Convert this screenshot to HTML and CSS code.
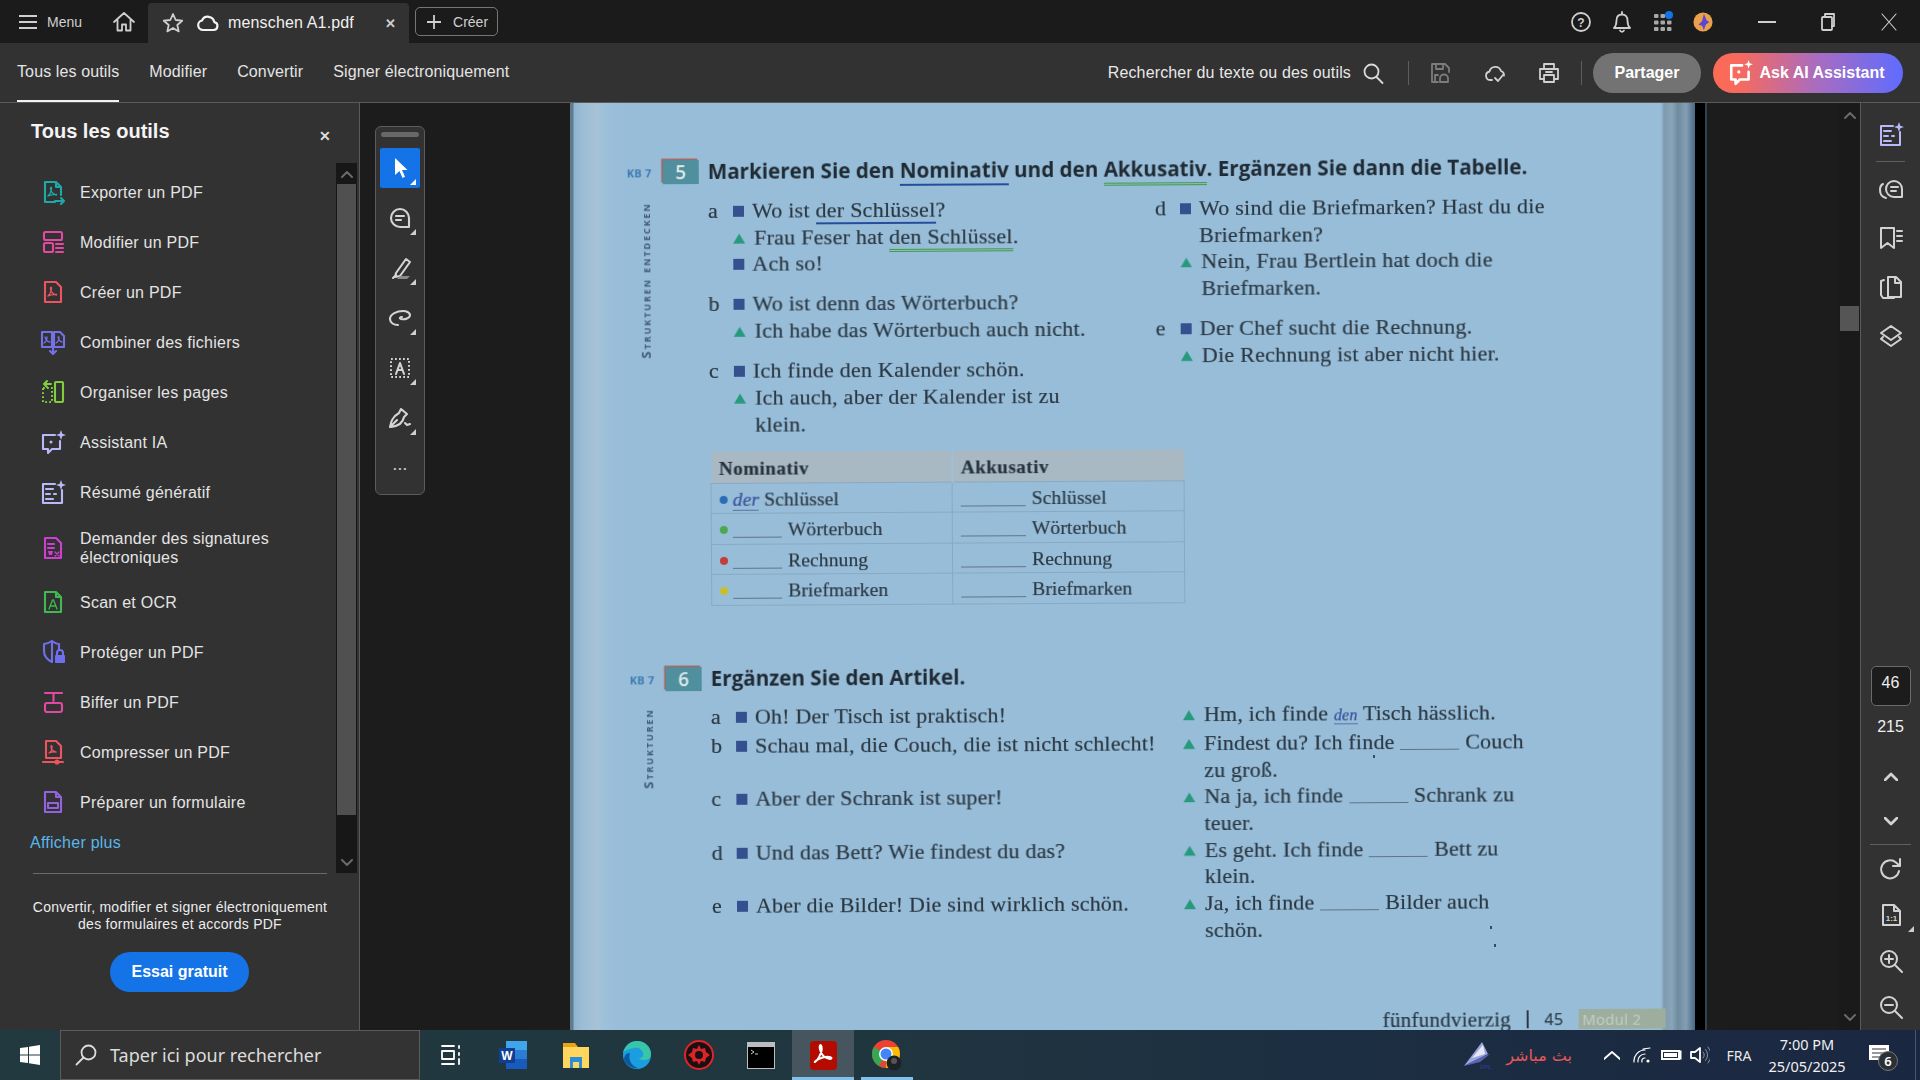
FILE: index.html
```html
<!DOCTYPE html>
<html lang="fr">
<head>
<meta charset="utf-8">
<title>menschen A1.pdf</title>
<link rel="stylesheet" href="styles.css">
</head>
<body>
<div class="app">
  <header class="titlebar">
    <svg class="ic menu-ic" viewBox="0 0 18 16"><path d="M0 2h18M0 8h18M0 14h18"/></svg>
    <span class="menu-label">Menu</span>
    <svg class="ic s24 home-ic" viewBox="0 0 24 24"><path d="M2 12 12 3l10 9M5.500 10v10.500h4.500v-6h4v6h4.500V10"/></svg>
    <div class="tab">
      <svg class="ic s24" viewBox="0 0 24 24"><path d="m12 3 2.700 6 6.500.7-4.900 4.300 1.400 6.400L12 17l-5.700 3.400L7.700 14 2.800 9.700 9.300 9z"/></svg>
      <svg class="ic s24 tab-cloud" viewBox="0 0 24 24"><path d="M7 19h10.500a4 4 0 0 0 .8-7.900A6.500 6.500 0 0 0 6 9.500 4.800 4.800 0 0 0 7 19z"/></svg>
      <span class="tab-name">menschen A1.pdf</span>
      <span class="tab-x">✕</span>
    </div>
    <div class="create"><svg class="ic s14" viewBox="0 0 14 14"><path d="M7 0v14M0 7h14"/></svg><span>Créer</span></div>
    <div class="title-right">
      <span class="tslot"><svg class="ic s22" viewBox="0 0 22 22"><circle cx="11" cy="11" r="9"/><text class="qmark" x="11" y="15.500">?</text></svg></span>
      <span class="tslot"><svg class="ic s22" viewBox="0 0 22 22"><path d="M3 17h16c-2-2-2.500-3.500-2.500-7.500C16.500 6 14.500 3.500 11 3.500S5.500 6 5.500 9.500C5.500 13.500 5 15 3 17zM9 19.500a2.200 2.200 0 0 0 4 0M11 1v2.500"/></svg></span>
      <span class="tslot grid-slot"><svg class="s22" viewBox="0 0 22 22"><g class="dots"><rect x="2" y="3" width="4.500" height="4" rx="1"/><rect x="8.500" y="3" width="4.500" height="4" rx="1"/><rect x="2" y="9.500" width="4.500" height="4" rx="1"/><rect x="8.500" y="9.500" width="4.500" height="4" rx="1"/><rect x="15" y="9.500" width="4.500" height="4" rx="1"/><rect x="2" y="16" width="4.500" height="4" rx="1"/><rect x="8.500" y="16" width="4.500" height="4" rx="1"/><rect x="15" y="16" width="4.500" height="4" rx="1"/></g><circle class="bluedot" cx="17" cy="4" r="4"/></svg></span>
      <span class="tslot"><svg class="s22 avatar" viewBox="0 0 22 22"><circle class="av-bg" cx="11" cy="11" r="10.500"/><path class="av-star" d="M12 2l3 7 3 2-4 3-2 6-2-5-4-1 4-4z"/></svg></span>
      <span class="wslot first-w"><svg class="ic s18" viewBox="0 0 18 18"><path d="M0 9h18"/></svg></span>
      <span class="wslot"><svg class="ic s18" viewBox="0 0 18 18"><rect x="3" y="4" width="10" height="13" rx="1"/><path d="M6 4V1h9v12h-2"/></svg></span>
      <span class="wslot"><svg class="ic thin s18" viewBox="0 0 18 18"><path d="m2 1 14 16M16 1 2 17"/></svg></span>
    </div>
  </header>

  <nav class="toolbar">
    <a class="nav active">Tous les outils</a>
    <a class="nav">Modifier</a>
    <a class="nav">Convertir</a>
    <a class="nav">Signer électroniquement</a>
    <div class="tool-right">
      <span class="search-text">Rechercher du texte ou des outils</span>
      <svg class="ic s22 search-ic" viewBox="0 0 22 22"><circle cx="9.500" cy="9.500" r="7"/><path d="m14.500 15 6 6"/></svg>
      <span class="vsep first-sep"></span>
      <svg class="ic s24 dim save-ic" viewBox="0 0 24 24"><path d="M10 21H4V3h13l4 4v4M8 3v5h7V3M7 21v-7h3"/><path d="M12 21v-3.500a4 4 0 0 1 8 0V21z"/></svg>
      <svg class="ic s24 cloud-ic" viewBox="0 0 24 24"><path d="M9 19H7a4.300 4.300 0 0 1-.5-8.500 6 6 0 0 1 11.500-.5 4.500 4.500 0 0 1 3 4.500"/><path d="m12 17 3 3 5-6"/></svg>
      <svg class="ic s24 print-ic" viewBox="0 0 24 24"><path d="M7 8V3h10v5M7 18H3V8h18v10h-4"/><rect x="7" y="14" width="10" height="7"/><path d="M9 11h6"/></svg>
      <span class="vsep second-sep"></span>
      <button class="pill share">Partager</button>
      <button class="pill ask"><svg class="ic s24 ask-ic" viewBox="0 0 24 24"><path d="M13 5H3v13h4v4l4-4h8v-7"/><path class="fillw" d="m19 0 1 3 3 1-3 1-1 3-1-3-3-1 3-1z"/><circle class="fillw" cx="10" cy="11" r="1.500"/></svg>Ask AI Assistant</button>
    </div>
  </nav>

  <main class="workspace">
    <aside class="panel">
      <div class="panel-head">
        <h1>Tous les outils</h1>
        <span class="panel-x">✕</span>
      </div>
      <div class="panel-scroll">
        <div class="tools">
          <a class="tool"><svg class="ic s26 teal" viewBox="0 0 26 26"><path d="M15 23H5V3h11l5 5v8M16 3v5h5"/><path class="thin" d="M8 17c2-1.500 3-4 3.500-7 .3-2-.9-2.500-1-.5 0 3 3 6 6 6.500M8 17c2-1 5-2 8.500-1.500"/><path d="M15 22h9m-3-3 3 3-3 3"/></svg><span>Exporter un PDF</span></a>
          <a class="tool"><svg class="ic s26 pink" viewBox="0 0 26 26"><rect x="4" y="3" width="18" height="8" rx="1.500"/><rect x="4" y="14" width="9" height="9" rx="1.500"/><path d="M16 15h7M16 19h7M16 23h7"/></svg><span>Modifier un PDF</span></a>
          <a class="tool"><svg class="ic s26 red" viewBox="0 0 26 26"><path d="M5 3h11l5 5v15H5z"/><path class="thin" d="M8 17c2-1.500 3-4 3.500-7 .3-2-.9-2.500-1-.5 0 3 3 6 6 6.500M8 17c2-1 5-2 8.500-1.500"/></svg><span>Créer un PDF</span></a>
          <a class="tool"><svg class="ic s26 violet" viewBox="0 0 26 26"><path d="M12 3H2v15h10zM14 18h10V7l-4-4h-6zM13 18v7m-3-3 3 3 3-3"/><path class="thin" d="M4 14c2-1 3-3 3-6M5 8c1 3 3 5 5 5M16 14c2-1 3-3 3-6M18 8c1 3 2 5 4 5"/></svg><span>Combiner des fichiers</span></a>
          <a class="tool"><svg class="ic s26 lime" viewBox="0 0 26 26"><rect x="15" y="3" width="8" height="20" rx="1"/><path class="dash" d="M3 9h9v14H3z"/><path d="M11 5H5m2-3L4 5l3 3"/></svg><span>Organiser les pages</span></a>
          <a class="tool"><svg class="ic s26 lav" viewBox="0 0 26 26"><path d="M15 6H3v14h5v4l4-4h8v-8"/><path class="fillc" d="m21 1 1.300 3.700L26 6l-3.700 1.300L21 11l-1.300-3.700L16 6l3.700-1.300z"/><circle class="fillc" cx="11" cy="13" r="1.500"/></svg><span>Assistant IA</span></a>
          <a class="tool"><svg class="ic s26 lav" viewBox="0 0 26 26"><path d="M15 5H3v19h19V11"/><path d="M6 10h7M6 15h4M14 15h2M6 20h7"/><path class="fillc" d="m21 1 1.300 3.700L26 6l-3.700 1.300L21 11l-1.300-3.700L16 6l3.700-1.300z"/></svg><span>Résumé génératif</span></a>
          <a class="tool tall"><svg class="ic s26 magenta" viewBox="0 0 26 26"><path d="M5 3h11l5 5v15H5z"/><path d="M8 9h6M8 13h6"/><path class="fillc" d="M8 16h5l-1 4H9z"/><path class="thin" d="m15 17 4 4m0-4-4 4"/></svg><span>Demander des signatures électroniques</span></a>
          <a class="tool"><svg class="ic s26 green" viewBox="0 0 26 26"><path d="M5 3h11l5 5v15H5zM16 3v5h5"/><path class="thin" d="m9 20 3.500-9h1L17 20M10.500 17h5"/></svg><span>Scan et OCR</span></a>
          <a class="tool"><svg class="ic s26 indigo" viewBox="0 0 26 26"><path d="M12 2c-3 2-6 3-8 3v7c0 5 4 9 8 11V2zM12 2c3 2 5 3 7 3v5"/><rect class="fillc" x="15" y="16" width="10" height="8" rx="1"/><path d="M17 16v-2a3 3 0 0 1 6 0v2"/></svg><span>Protéger un PDF</span></a>
          <a class="tool"><svg class="ic s26 pink" viewBox="0 0 26 26"><path d="M5 4h17M13.500 4v8"/><rect x="5" y="14" width="17" height="9" rx="2"/></svg><span>Biffer un PDF</span></a>
          <a class="tool"><svg class="ic s26 red" viewBox="0 0 26 26"><path d="M6 19V2h10l5 5v12zM3 23h20"/><circle cx="17" cy="23" r="1.500"/><path class="thin" d="M9 14c2-1 3-3 3-6 0-2-1-1.500-1 0 0 2 2 4 5 5M9 14c2-1 5-1.500 7-1"/></svg><span>Compresser un PDF</span></a>
          <a class="tool"><svg class="ic s26 purple" viewBox="0 0 26 26"><path d="M5 3h11l5 5v15H5zM16 3v5h5"/><rect x="8" y="14" width="10" height="5"/></svg><span>Préparer un formulaire</span></a>
          <a class="more">Afficher plus</a>
        </div>
        <div class="pscroll">
          <div class="pscroll-btn"><svg class="ic chev" viewBox="0 0 12 8"><path d="m1 7 5-5 5 5"/></svg></div>
          <div class="pscroll-thumb"></div>
          <div class="pscroll-rest"><svg class="ic chev" viewBox="0 0 12 8"><path d="m1 1 5 5 5-5"/></svg></div>
        </div>
      </div>
      <div class="promo">
        <p>Convertir, modifier et signer électroniquement<br>des formulaires et accords PDF</p>
        <button class="trial">Essai gratuit</button>
      </div>
    </aside>

    <section class="canvas">
      <div class="palette">
        <div class="grab"></div>
        <div class="pbtn on"><svg class="s24" viewBox="0 0 24 24"><path class="fillw" d="M7 2v17l4.500-4 3 7 2.500-1.200-3-6.800h5.500z"/></svg></div>
        <div class="pbtn"><svg class="ic s24" viewBox="0 0 24 24"><path d="M21 21h-9a9 9 0 1 1 9-9zM8 10h8M8 14h5"/></svg></div>
        <div class="pbtn"><svg class="ic s24" viewBox="0 0 24 24"><path d="m8 17 10-14 4 3-10 14-5 1zM5 22l3-3"/><path class="fillg" d="M9 23h10l3-3H12z"/></svg></div>
        <div class="pbtn"><svg class="ic s24" viewBox="0 0 24 24"><path d="M10 19c-4 0-8-2-8-6 0-5 7-8 13-8 4 0 7 2 7 4 0 3-5 5-9 4-2-.5-1-2 1-2"/></svg></div>
        <div class="pbtn"><svg class="ic s24" viewBox="0 0 24 24"><path class="dash" d="M3 3h18v18H3z"/><path d="m8 18 4-11 4 11M9.500 14h5"/></svg></div>
        <div class="pbtn"><svg class="ic s24" viewBox="0 0 24 24"><path d="M2 21c1-5 2-10 9-14l2-4 6 5-3 3c-1 6-6 9-13 10zM2 21l7-7"/><path d="m17 17 2 2 3-1"/></svg></div>
        <div class="pbtn plain"><span class="ellipsis">• • •</span></div>
      </div>

      <div class="sheet">
        <div class="sheet-inner">
          <div class="ex-head">
            <div class="side"><span class="kb">KB 7</span><span class="num">5</span></div>
            <h2>Markieren Sie den <u class="nom">Nominativ</u> und den <u class="akk">Akkusativ</u>. Ergänzen Sie dann die Tabelle.</h2>
          </div>
          <div class="ex5">
            <div class="side"><span class="vert">Strukturen entdecken</span></div>
            <div class="col">
              <div class="group"><b class="let">a</b><div><p class="ln"><i class="sq"></i><span>Wo ist <u class="nom thinline">der Schlüssel</u>?</span></p><p class="ln"><i class="tri"></i><span>Frau Feser hat <u class="akk thinline">den Schlüssel</u>.</span></p><p class="ln"><i class="sq"></i><span>Ach so!</span></p></div></div>
              <div class="group"><b class="let">b</b><div><p class="ln"><i class="sq"></i><span>Wo ist denn das Wörterbuch?</span></p><p class="ln"><i class="tri"></i><span>Ich habe das Wörterbuch auch nicht.</span></p></div></div>
              <div class="group"><b class="let">c</b><div><p class="ln"><i class="sq"></i><span>Ich finde den Kalender schön.</span></p><p class="ln"><i class="tri"></i><span>Ich auch, aber der Kalender ist zu<br>klein.</span></p></div></div>
            </div>
            <div class="col">
              <div class="group"><b class="let">d</b><div><p class="ln"><i class="sq"></i><span>Wo sind die Briefmarken? Hast du die<br>Briefmarken?</span></p><p class="ln"><i class="tri"></i><span>Nein, Frau Bertlein hat doch die<br>Briefmarken.</span></p></div></div>
              <div class="group"><b class="let">e</b><div><p class="ln"><i class="sq"></i><span>Der Chef sucht die Rechnung.</span></p><p class="ln"><i class="tri"></i><span>Die Rechnung ist aber nicht hier.</span></p></div></div>
            </div>
          </div>
          <table class="grammar">
            <thead><tr><th>Nominativ</th><th>Akkusativ</th></tr></thead>
            <tbody>
              <tr><td><i class="dot d-blue"></i><em class="hand">der</em> Schlüssel</td><td><i class="blank wide"></i>Schlüssel</td></tr>
              <tr><td><i class="dot d-green"></i><i class="blank"></i>Wörterbuch</td><td><i class="blank wide"></i>Wörterbuch</td></tr>
              <tr><td><i class="dot d-red"></i><i class="blank"></i>Rechnung</td><td><i class="blank wide"></i>Rechnung</td></tr>
              <tr><td><i class="dot d-yellow"></i><i class="blank"></i>Briefmarken</td><td><i class="blank wide"></i>Briefmarken</td></tr>
            </tbody>
          </table>
          <div class="ex-head second">
            <div class="side"><span class="kb">KB 7</span><span class="num">6</span></div>
            <h2>Ergänzen Sie den Artikel.</h2>
          </div>
          <div class="ex6">
            <div class="side spanall"><span class="vert">Strukturen</span></div>
            <div class="group"><b class="let">a</b><p class="ln"><i class="sq"></i><span>Oh! Der Tisch ist praktisch!</span></p></div>
            <p class="ln"><i class="tri"></i><span>Hm, ich finde <em class="hand small">den</em> Tisch hässlich.</span></p>
            <div class="group"><b class="let">b</b><p class="ln"><i class="sq"></i><span>Schau mal, die Couch, die ist nicht schlecht!</span></p></div>
            <p class="ln"><i class="tri"></i><span>Findest du? Ich finde <i class="blank mid"></i>Couch<br>zu groß.</span></p>
            <div class="group"><b class="let">c</b><p class="ln"><i class="sq"></i><span>Aber der Schrank ist super!</span></p></div>
            <p class="ln"><i class="tri"></i><span>Na ja, ich finde <i class="blank mid"></i>Schrank zu<br>teuer.</span></p>
            <div class="group"><b class="let">d</b><p class="ln"><i class="sq"></i><span>Und das Bett? Wie findest du das?</span></p></div>
            <p class="ln"><i class="tri"></i><span>Es geht. Ich finde <i class="blank mid"></i>Bett zu<br>klein.</span></p>
            <div class="group"><b class="let">e</b><p class="ln"><i class="sq"></i><span>Aber die Bilder! Die sind wirklich schön.</span></p></div>
            <p class="ln"><i class="tri"></i><span>Ja, ich finde <i class="blank mid"></i>Bilder auch<br>schön.</span></p>
          </div>
          <div class="foot"><span>fünfundvierzig</span><span class="bar"></span><span class="pg">45</span><span class="modul">Modul 2</span></div>
        </div>
        <i class="speck sp1"></i><i class="speck sp2"></i><i class="speck sp3"></i>
      </div>

      <div class="gap"></div>

      <div class="vscroll">
        <svg class="ic chev" viewBox="0 0 12 8"><path d="m1 7 5-5 5 5"/></svg>
        <div class="vthumb"></div>
        <svg class="ic chev" viewBox="0 0 12 8"><path d="m1 1 5 5 5-5"/></svg>
      </div>

      <div class="rail">
        <div class="rbtn"><svg class="ic s26 lav" viewBox="0 0 26 26"><path d="M15 5H3v19h19V11"/><path d="M6 10h7M6 15h4M14 15h2M6 20h7"/><path class="fillc" d="m21 1 1.300 3.700L26 6l-3.700 1.300L21 11l-1.300-3.700L16 6l3.700-1.300z"/></svg></div>
        <div class="hsep top-sep"></div>
        <div class="rbtn"><svg class="ic s24" viewBox="0 0 24 24"><path d="M23 20h-8a8 8 0 1 1 8-8zM12 10h7M12 14h5"/><path d="M7 21c-4-1-6-4-6-8 0-2 1-5 3-6"/></svg></div>
        <div class="rbtn"><svg class="ic s24" viewBox="0 0 24 24"><path d="M2 2h13v20l-6.500-5L2 22zM18 5h5M18 10h5M18 15h5"/></svg></div>
        <div class="rbtn"><svg class="ic s24" viewBox="0 0 24 24"><path d="M9 2h8l5 5v15H9zM16 2v6h6M5 5 2 6v14l2 3h11"/></svg></div>
        <div class="rbtn"><svg class="ic s24" viewBox="0 0 24 24"><path d="m12 2 10 7-10 7L2 9zM4 13l-2 2 10 7 10-7-2-2"/></svg></div>
        <div class="rail-low">
          <div class="page-box">46</div>
          <div class="page-total">215</div>
          <div class="rbtn low"><svg class="ic bold chevb" viewBox="0 0 14 9"><path d="m1 8 6-6 6 6"/></svg></div>
          <div class="rbtn low"><svg class="ic bold chevb" viewBox="0 0 14 9"><path d="m1 1 6 6 6-6"/></svg></div>
          <div class="hsep bottom-sep"></div>
          <div class="rbtn lower"><svg class="ic s24" viewBox="0 0 24 24"><path d="M20 14a9 9 0 1 1-3-8.500L21 9M21 2v7h-7"/></svg></div>
          <div class="rbtn lower mark"><svg class="ic s24" viewBox="0 0 24 24"><path d="M4 2h11l6 6v14H4zM15 2v6h6"/><text class="oneone" x="12.500" y="18">1:1</text></svg></div>
          <div class="rbtn lower"><svg class="ic s24" viewBox="0 0 24 24"><circle cx="10" cy="10" r="8"/><path d="m16 16 7 7M10 6v8M6 10h8"/></svg></div>
          <div class="rbtn lower"><svg class="ic s24" viewBox="0 0 24 24"><circle cx="10" cy="10" r="8"/><path d="m16 16 7 7M6 10h8"/></svg></div>
        </div>
      </div>
    </section>
  </main>

  <footer class="taskbar">
    <div class="start"><svg class="win" viewBox="0 0 20 20"><path d="M0 3l8-1v7.500H0zM9 1.800 20 0v9.500H9zM0 10.500h8V18l-8-1zM9 10.500h11V20L9 18.200z"/></svg></div>
    <div class="tsearch"><svg class="ic s22 thin-wide" viewBox="0 0 22 22"><circle cx="13.500" cy="8.500" r="7"/><path d="m8.500 13.500-7 7"/></svg><span>Taper ici pour rechercher</span></div>
    <div class="tslotb"><svg class="ic s22" viewBox="0 0 22 22"><path d="M2 2h12M2 20h12M2 7h12v8H2zM19 2v2M19 9v2M19 15v5"/></svg></div>
    <div class="tslotb"><svg class="s32" viewBox="0 0 32 32"><path fill="#41a5ee" d="M9 2h21v9H9z"/><path fill="#2b7cd3" d="M9 11h21v9H9z"/><path fill="#185abd" d="M9 20h21v10H9z"/><rect fill="#103f91" x="2" y="9" width="16" height="15"/><text class="wletter" x="10" y="21">W</text></svg></div>
    <div class="tslotb"><svg class="s32" viewBox="0 0 32 32"><path fill="#e8a317" d="M4 4h12l3 4H4z"/><path fill="#ffd75e" d="M4 8h26v21H4z"/><path fill="#2b8fd8" d="M11 18h12v11h-3v-6h-6v6h-3z"/></svg></div>
    <div class="tslotb"><svg class="s32" viewBox="0 0 32 32"><circle fill="#1b9de2" cx="16" cy="16" r="14"/><path fill="#37c6a8" d="M2 14C4 6 10 2 16 2c8 0 14 6 14 13 0 4-3 6-7 6-3 0-5-1-5-2 3 0 5-2 4-5-1-4-5-6-9-5-5 1-9 2-11 5z"/><path fill="#0c5a9e" d="M9 14c-2 6 1 13 8 15-6 1-12-3-14-8 0-4 2-7 6-7z"/></svg></div>
    <div class="tslotb"><svg class="s32" viewBox="0 0 32 32"><circle fill="#1a1012" stroke="#e0242a" stroke-width="2" cx="16" cy="16" r="14"/><path fill="#d8242a" d="M16 6l2 4 4-1 1 4 4 3-4 3-1 4-4-1-2 4-2-4-4 1-1-4-4-3 4-3 1-4 4 1z"/><circle fill="#1a1012" cx="16" cy="16" r="4"/></svg></div>
    <div class="tslotb"><svg class="s32" viewBox="0 0 32 32"><rect fill="#bdbdbd" x="2" y="3" width="28" height="27"/><rect fill="#000" x="3" y="8" width="26" height="21"/><path stroke="#ccc" fill="none" d="M6 11l3 2-3 2M10 15h3"/></svg></div>
    <div class="tslotb act"><svg class="s32" viewBox="0 0 32 32"><rect fill="#b30b00" x="3" y="2" width="27" height="29" rx="4"/><path class="acro" d="M8 23c3-2 5-6 6.500-11 .6-3 0-6-1-6s-1.200 3 0 6c1.500 4 5 7.500 9.500 8 1.800 0 2-1.300.5-1.800-4-1-9.500.5-13 2.500-2 1.200-3.300 2.500-2.500 2.300z"/></svg></div>
    <div class="tslotb run"><svg class="s32 chrome" viewBox="0 0 32 32"><circle fill="#ea4335" cx="15" cy="15" r="14"/><path fill="#34a853" d="M15 29A14 14 0 0 1 2.900 8L15 15l-7 12z"/><path fill="#fbbc04" d="M15 29a14 14 0 0 0 12.100-21H15z"/><circle fill="#fff" cx="15" cy="15" r="7"/><circle fill="#4285f4" cx="15" cy="15" r="5.500"/><circle fill="#1c2228" cx="23" cy="24" r="7.500"/><circle fill="#555" cx="23" cy="22" r="3"/></svg></div>
    <div class="tray">
      <svg class="epl" viewBox="0 0 34 30"><path fill="#9aa5dd" d="M4 26 22 2l6 12z"/><path fill="#e8e8f5" d="M12 18 23 5l2 9z"/><path fill="#5864b8" d="m4 26 20-10 6-2-10 8z"/><text class="epl-t" x="20" y="29">EPL</text></svg>
      <span class="live" lang="ar" dir="rtl">بث مباشر</span>
      <span class="trayi i-chev"><svg class="ic s16w" viewBox="0 0 16 9"><path d="m0 8 8-7 8 7"/></svg></span>
      <span class="trayi"><svg class="ic s18" viewBox="0 0 18 18"><path d="M1 16A11 11 0 0 1 12 4M5 16a7 7 0 0 1 7-8M9 16a3 3 0 0 1 3-4M10 3l7-1" class="thinw"/><circle class="fillw" cx="15" cy="15" r="1.600"/></svg></span>
      <span class="trayi batt"><i></i></span>
      <span class="trayi"><svg class="ic s20w" viewBox="0 0 20 18"><path d="M1 6h4l5-4v14l-5-4H1z"/><path class="faint" d="M13 6a4 4 0 0 1 0 6M15.500 3.500a8 8 0 0 1 0 11M18 1a12 12 0 0 1 0 16"/></svg></span>
      <span class="lang">FRA</span>
      <span class="clock"><span>7:00 PM</span><span>25/05/2025</span></span>
      <span class="notif"><svg class="note" viewBox="0 0 20 20"><path fill="#fff" d="M0 0h20v15H0z"/><path stroke="#333" d="M3 4h14M3 8h14M3 12h8"/></svg><b class="badge">6</b></span>
      <span class="showdesk"></span>
    </div>
  </footer>
</div>
</body>
</html>
```

FILE: styles.css
```css
* { box-sizing: border-box; }
html, body { margin: 0; padding: 0; width: 1920px; height: 1080px; overflow: hidden; }
body { font-family: "Liberation Sans", Arial, sans-serif; font-size: 16px; color: #e8e8e8; background: #1c1c1c; }
p, h1, h2 { margin: 0; }
button { font-family: inherit; border: 0; color: #fff; }
.app { display: flex; flex-direction: column; width: 1920px; height: 1080px; }

/* icons */
.ic { fill: none; stroke: currentColor; stroke-width: 1.800; stroke-linecap: round; stroke-linejoin: round; flex: none; }
.ic .thin, .ic.thin { stroke-width: 1.100; }
.ic.bold { stroke-width: 2.600; }
.ic .dash { stroke-dasharray: 1.800 2.200; stroke-linecap: butt; stroke-width: 2; }
.ic .fillc { fill: currentColor; stroke: none; }
.fillw { fill: #fff; stroke: none; }
.fillg { fill: #8a8a8a; stroke: none; }
.s14 { width: 14px; height: 14px; }
.s18 { width: 18px; height: 18px; }
.s22 { width: 22px; height: 22px; }
.s24 { width: 24px; height: 24px; }
.s26 { width: 26px; height: 26px; }
.s32 { width: 32px; height: 32px; }
.s16w { width: 16px; height: 9px; }
.s20w { width: 20px; height: 18px; }
.chev { width: 12px; height: 8px; color: #6a6a6a; stroke-width: 2; }
.chevb { width: 14px; height: 9px; }
.teal { color: #1fa8a8; } .pink { color: #e24aa2; } .red { color: #ec5560; } .violet { color: #7470e6; }
.lime { color: #7fce3c; } .lav { color: #b9b9fa; } .magenta { color: #cc3fd0; } .green { color: #3fb950; }
.indigo { color: #6f6fec; } .purple { color: #9263dc; }
.tool .ic { stroke-width: 2.100; }
.tool .ic .thin { stroke-width: 1.300; }
.palette .ic { stroke-width: 2.100; }
.rail .ic { stroke-width: 2; }
.rail .ic.bold { stroke-width: 2.800; }

/* title bar */
.titlebar { flex: none; height: 43px; background: #1b1b1b; display: flex; align-items: center; padding-left: 19px; color: #cfcfcf; }
.menu-ic { width: 18px; height: 16px; }
.menu-label { margin-left: 10px; font-size: 14px; }
.home-ic { margin-left: 30px; }
.tab { margin-left: 12px; align-self: flex-end; width: 261px; height: 40px; background: #323232; border-radius: 4px 4px 0 0; display: flex; align-items: center; padding-left: 13px; }
.tab-cloud { margin-left: 11px; color: #f4f4f4; stroke-width: 2.200; }
.tab-name { margin-left: 8px; color: #f0f0f0; letter-spacing: .15px; }
.tab-x { margin-left: 31px; font-size: 13px; font-weight: 700; color: #cfcfcf; }
.create { margin-left: 6px; width: 83px; height: 29px; border: 1px solid #767676; border-radius: 5px; display: flex; align-items: center; padding-left: 11px; font-size: 14px; gap: 12px; }
.title-right { margin-left: auto; display: flex; align-items: center; padding-right: 0.500px; }
.tslot { width: 41px; display: flex; justify-content: center; }
.qmark { font-family: "Liberation Sans", sans-serif; font-size: 12px; font-weight: 700; text-anchor: middle; fill: #cfcfcf; stroke: none; }
.dots rect { fill: #a8a8a8; }
.bluedot { fill: #1473e6; }
.avatar { width: 20px; height: 20px; margin-right: 2px; }
.av-bg { fill: #eaa24a; }
.av-star { fill: #5a45d8; }
.wslot { width: 61px; display: flex; justify-content: center; }
.first-w { margin-left: 12px; }

/* tool bar */
.toolbar { flex: none; height: 60px; background: #323232; border-bottom: 1px solid #5a5a5a; display: flex; align-items: stretch; padding-left: 17px; }
.nav { display: flex; align-items: center; height: 59px; margin-right: 30px; padding-bottom: 2px; color: #e4e4e4; letter-spacing: .12px; }
.nav.active { border-bottom: 2px solid #f2f2f2; padding-bottom: 0; }
.tool-right { margin-left: auto; display: flex; align-items: center; padding-right: 17px; color: #d0d0d0; }
.search-text { color: #e8e8e8; letter-spacing: .15px; }
.search-ic { margin-left: 11px; color: #d8d8d8; }
.vsep { width: 1px; height: 24px; background: #5e5e5e; }
.first-sep { margin-left: 24px; }
.save-ic { margin-left: 19px; }
.dim { color: #7c7c7c; }
.cloud-ic { margin-left: 31px; }
.print-ic { margin-left: 30px; }
.second-sep { margin-left: 20px; }
.pill { height: 40px; border-radius: 20px; font-size: 16px; font-weight: 700; display: flex; align-items: center; justify-content: center; padding: 0; }
.share { margin-left: 11px; width: 108px; background: #737373; }
.ask { margin-left: 12px; width: 190px; padding-right: 3px; background: linear-gradient(90deg, #ff6a55 0%, #f56a60 15%, #a86cc0 55%, #5f6cff 100%); gap: 5px; }
.ask-ic { color: #fff; stroke-width: 2.400; width: 26px; height: 26px; }

/* workspace */
.workspace { flex: 1; display: flex; min-height: 0; }
.panel { flex: none; width: 360px; background: #323232; border-right: 1px solid #5a5a5a; display: flex; flex-direction: column; }
.panel-head { height: 60px; flex: none; display: flex; justify-content: space-between; padding: 16px 28px 0 31px; }
.panel-head h1 { font-size: 20px; font-weight: 700; line-height: 24px; color: #f4f4f4; }
.panel-x { font-size: 14px; font-weight: 700; margin-top: 9px; color: #dcdcdc; }
.panel-scroll { flex: none; height: 710px; display: flex; padding-right: 2px; }
.tools { flex: none; width: 336px; padding-top: 4px; position: relative; }
.tool { height: 50px; display: flex; align-items: center; gap: 14px; padding-left: 40px; color: #e4e4e4; line-height: 19px; letter-spacing: .25px; }
.tool.tall { height: 60px; padding-top: 2px; }
.tool span { width: 220px; }
.more { display: block; margin: 6px 0 0 30px; line-height: 20px; color: #5ab6ea; letter-spacing: .25px; }
.pscroll { width: 21px; background: #171717; display: flex; flex-direction: column; }
.pscroll-btn { height: 21px; display: flex; align-items: center; justify-content: center; }
.pscroll-thumb { height: 631px; margin: 0 1px; background: #505050; }
.pscroll-rest { flex: 1; display: flex; align-items: flex-end; justify-content: center; padding-bottom: 6px; }
.promo { flex: 1; margin: 0 32px 0 33px; border-top: 1px solid #6a6a6a; text-align: center; padding-top: 25px; }
.promo p { font-size: 14px; line-height: 17px; color: #ececec; margin: 0 -8px; letter-spacing: .26px; }
.trial { display: block; margin: 19px 0 0 77px; width: 139px; height: 40px; border-radius: 20px; background: #1473e6; font-size: 16px; font-weight: 700; }

/* canvas */
.canvas { flex: 1; display: flex; align-items: stretch; min-width: 0; background: #1c1c1c; }
.palette { flex: none; align-self: flex-start; width: 50px; height: 369px; margin: 23px 0 0 15px; background: #323232; border: 1px solid #5c5c5c; border-radius: 6px; padding: 5px 4px 0; display: flex; flex-direction: column; align-items: center; color: #d4d4d4; }
.grab { width: 38px; height: 5px; border-radius: 3px; background: #686868; margin-bottom: 11px; flex: none; }
.pbtn { width: 40px; height: 40px; margin-bottom: 10px; flex: none; display: flex; align-items: center; justify-content: center; border-radius: 2px; position: relative; }
.pbtn.on { background: #1473e6; }
.pbtn::after { content: ""; position: absolute; right: 4px; bottom: 3px; border-style: solid; border-width: 0 0 6px 6px; border-color: transparent transparent #cfcfcf transparent; }
.pbtn.on::after { border-bottom-color: #fff; }
.pbtn.plain::after { display: none; }
.ellipsis { font-size: 8px; letter-spacing: 0; color: #cfcfcf; }

/* scanned page */
.sheet { flex: none; width: 1137px; height: 927px; margin-left: 145px; position: relative; overflow: hidden;
  background: linear-gradient(90deg, #5f7b90 0, #5f7b90 3px, #8fb3cf 4px, #9dbdd6 12px, #a6c2d7 28px, #9cbfda 36px, #98bdd9 60px, #98bdd9 1091px, #7f9bb0 1094px, #8aa4b8 1102px, #6f8b9e 1108px, #849fb4 1116px, #56728e 1123px, #4a6a8a 1125px, #000 1125px, #000 1135px, #2f4250 1135px, #2f4250 1137px); }
.sheet-inner { position: absolute; left: 57px; top: 53px; width: 1060px; transform: rotate(-0.33deg); transform-origin: 81px 55px; font-family: "Liberation Serif", "Times New Roman", serif; font-size: 22px; line-height: 26.700px; letter-spacing: .25px; color: #2b3842; -webkit-text-stroke: .2px #2b3842; filter: blur(0.35px); }
.side { position: relative; }
.ex-head { display: grid; grid-template-columns: 81px 1fr; height: 28px; align-items: center; }
.ex-head .side { display: flex; align-items: center; }
.kb { width: 36px; margin-top: 4px; font-family: "Open Sans", sans-serif; font-size: 11px; font-weight: 700; color: #3d7ab0; -webkit-text-stroke: 0; }
.num { width: 36px; height: 24px; margin-top: 2px; background: #4f8f9e; box-shadow: -1.500px -1.500px 0 #a8625c; color: #dfe9ea; -webkit-text-stroke: 0; font-family: "Open Sans", sans-serif; font-size: 19px; font-weight: 600; line-height: 24px; text-align: center; }
.ex-head h2 { font-family: "Open Sans", sans-serif; font-size: 20.600px; font-weight: 700; line-height: 28px; letter-spacing: 0; color: #1f2a33; -webkit-text-stroke: 0; white-space: nowrap; }
u { text-decoration: none; }
u.nom { border-bottom: 2.500px solid #264d9c; }
u.akk { border-bottom: 3.500px double #3d9a3d; }
u.thinline { border-bottom-width: 2px; }
u.akk.thinline { border-bottom-width: 3px; }
.ex5 { display: grid; grid-template-columns: 81px 447px 1fr; margin-top: 14px; height: 240px; }
.vert { position: absolute; left: 10px; top: 4px; writing-mode: vertical-rl; transform: rotate(180deg); font-family: "Open Sans", sans-serif; font-variant: small-caps; font-weight: 700; font-size: 13px; line-height: 16px; letter-spacing: 1.900px; color: #3d5a78; -webkit-text-stroke: 0; white-space: nowrap; }
.group { display: grid; grid-template-columns: 25px 1fr; margin-bottom: 13.300px; }
.let { font-weight: 400; }
.ln { display: flex; align-items: flex-start; }
.sq { flex: none; width: 11px; height: 11px; margin: 8px 8px 0 0; background: #34508f; }
.tri { flex: none; width: 12px; height: 10px; margin: 9px 9px 0 0; background: #27997d; clip-path: polygon(50% 0, 100% 100%, 0 100%); }
.grammar { margin: 14px 0 0 82px; width: 474px; border-collapse: collapse; table-layout: fixed; font-size: 19.600px; line-height: 24px; letter-spacing: .1px; }
.grammar th { height: 31px; text-align: left; padding: 4px 0 0 8px; background: #a9b9c4; font-weight: 700; font-size: 19px; letter-spacing: .5px; color: #27323a; }
.grammar th:first-child { width: 241px; }
.grammar th + th { border-left: 2px solid #9dc0da; }
.grammar td { height: 30.500px; padding: 3px 0 0 8px; border: 1px solid #88a9c1; white-space: nowrap; }
.dot { display: inline-block; width: 8px; height: 8px; border-radius: 50%; margin-right: 5px; vertical-align: 2px; }
.d-blue { background: #2a6db5; } .d-green { background: #4da84d; } .d-red { background: #c23d3d; } .d-yellow { background: #c9bf2c; }
.blank { display: inline-block; width: 49px; height: 1px; border-bottom: 1.500px solid #5f7488; margin-right: 6px; vertical-align: -2px; }
.blank.wide { width: 65px; }
.blank.mid { width: 59px; margin: 0 6px 0 0; vertical-align: -1px; }
.hand { font-style: italic; color: #3a58b8; border-bottom: 1px solid #5770a8; }
.hand.small { font-size: 16px; }
.second { margin-top: 57px; }
.ex6 { display: grid; grid-template-columns: 81px 472px 1fr; margin-top: 13.600px; letter-spacing: .2px; }
.ex6 .group { margin: 0; grid-column: 2; }
.ex6 > .ln { grid-column: 3; }
.spanall { grid-column: 1; grid-row: 1 / span 5; }
.foot { display: flex; align-items: center; margin: 68px 0 0 751px; height: 20px; font-size: 21px; line-height: 20px; }
.foot .bar { width: 1.500px; height: 18px; background: #2b3842; margin: 0 16px; }
.pg { font-family: "Open Sans", sans-serif; font-size: 16px; }
.modul { margin-left: 15px; width: 87px; height: 20px; background: #9dae9f; color: #c4d0c6; -webkit-text-stroke: 0; font-family: "Open Sans", sans-serif; font-size: 15px; line-height: 20px; padding-left: 4px; }
.speck { position: absolute; width: 2px; height: 3px; background: #3a4a56; }
.sp1 { left: 920px; top: 823px; }
.sp2 { left: 924px; top: 841px; }
.sp3 { left: 803px; top: 652px; }

.gap { flex: 1; }
.vscroll { flex: none; width: 21px; background: #1a1a1a; display: flex; flex-direction: column; align-items: center; padding: 8px 0; position: relative; }
.vscroll .chev:last-child { margin-top: auto; }
.vthumb { position: absolute; left: 1px; top: 203px; width: 19px; height: 25px; background: #555; }
.rail { flex: none; width: 60px; background: #323232; border-left: 1px solid #5a5a5a; display: flex; flex-direction: column; align-items: center; padding-top: 6px; color: #d2d2d2; }
.rbtn { width: 100%; height: 49px; flex: none; display: flex; align-items: center; justify-content: center; position: relative; }
.rbtn.low { height: 45px; }
.rbtn.lower { height: 46px; }
.rbtn.mark::after { content: ""; position: absolute; right: 6px; bottom: 6px; border-style: solid; border-width: 0 0 6px 6px; border-color: transparent transparent #cfcfcf transparent; }
.hsep { background: #5f5f5f; height: 1px; flex: none; }
.top-sep { width: 29px; margin: 3px 0 2px; }
.bottom-sep { width: 41px; margin: 0 0 1px; }
.rail-low { margin-top: auto; width: 100%; display: flex; flex-direction: column; align-items: center; }
.page-box { width: 40px; height: 40px; background: #1c1c1c; border: 1px solid #6a6a6a; border-radius: 5px; text-align: center; font-size: 16px; line-height: 32px; color: #eee; flex: none; }
.page-total { height: 48px; line-height: 42px; font-size: 16px; color: #f0f0f0; flex: none; }
.oneone { font-family: "Liberation Sans", sans-serif; font-size: 8px; font-weight: 700; text-anchor: middle; fill: #d2d2d2; stroke: none; }

/* task bar */
.taskbar { flex: none; height: 50px; background: linear-gradient(90deg, #21393f 0, #20363f 45%, #1c2e42 70%, #1a2741 100%); display: flex; align-items: center; color: #fff; }
.start { width: 60px; display: flex; justify-content: center; }
.win { width: 20px; height: 20px; fill: #fff; }
.tsearch { width: 360px; height: 50px; background: #333; border: 1px solid #5b5b5b; border-bottom-width: 1px; display: flex; align-items: center; padding-left: 14px; gap: 13px; font-family: "Noto Sans", sans-serif; font-size: 18px; color: #dcdcdc; }
.tslotb { width: 62px; height: 50px; display: flex; align-items: center; justify-content: center; position: relative; flex: none; }
.tslotb.act { background: #46555e; box-shadow: inset 0 -3px 0 #7ec0ee; }
.tslotb.run::after { content: ""; position: absolute; left: 7px; right: 3px; bottom: 0; height: 3px; background: #7ec0ee; }
.chrome { margin-left: 4px; }
.wletter { font-family: "Liberation Sans", sans-serif; font-size: 12px; font-weight: 700; fill: #fff; text-anchor: middle; }
.acro { fill: none; stroke: #fff; stroke-width: 2; }
.tray { margin-left: auto; display: flex; align-items: center; height: 50px; width: 460px; }
.epl { width: 34px; height: 30px; flex: none; }
.epl-t { font-family: "Liberation Sans", sans-serif; font-size: 6px; font-weight: 700; fill: #2a3a8a; }
.live { margin-left: 11px; width: 67px; font-family: "DejaVu Sans", "Noto Sans", sans-serif; font-size: 16px; color: #e85858; white-space: nowrap; }
.trayi { width: 29px; display: flex; justify-content: center; flex: none; }
.i-chev { margin-left: 25px; width: 30px; }
.ic .thinw { stroke-width: 1.200; }
.ic .faint { stroke: #8a94a5; stroke-width: 1; }
.batt i { display: block; width: 19px; height: 10px; border: 2px solid #fff; background: linear-gradient(#fff, #fff) 1px 1px / 13px 4px no-repeat; box-shadow: 2px 0 0 -0.500px #fff; }
.lang { width: 50px; text-align: center; font-family: "Noto Sans", sans-serif; font-size: 14px; color: #e8e8e8; }
.clock { width: 86px; display: flex; flex-direction: column; align-items: center; font-family: "Noto Sans", sans-serif; font-size: 14.500px; line-height: 22px; color: #f0f0f0; }
.notif { width: 58px; display: flex; justify-content: center; position: relative; }
.note { width: 20px; height: 20px; }
.badge { position: absolute; left: 28px; top: 6px; width: 20px; height: 20px; border-radius: 50%; background: #2b2f36; border: 1px solid #777; font-family: "Noto Sans", sans-serif; font-size: 13px; line-height: 18px; text-align: center; font-weight: 600; }
.showdesk { margin-left: 7px; width: 1px; height: 50px; background: #4a5566; }
```
